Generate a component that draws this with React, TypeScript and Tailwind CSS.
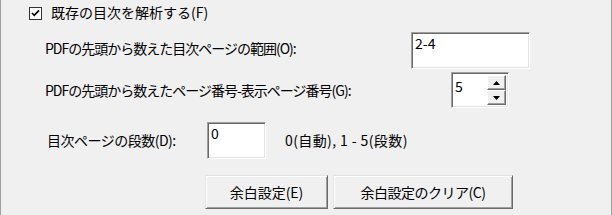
import React from 'react';

const font = { fontFamily: '"Noto Sans CJK JP", "Noto Sans", sans-serif' };

// sunken edit box, classic Win32 look
const Edit: React.FC<{ value: string; className?: string }> = ({ value, className = '' }) => (
  <div
    className={`bg-white border border-t-[#a0a0a0] border-l-[#a0a0a0] border-b-white border-r-white shadow-[inset_1px_1px_0_#696969,inset_-1px_-1px_0_#e3e3e3] pl-[3px] pt-[1px] text-[14px] leading-[18px] ${className}`}
  >
    {value}
  </div>
);

const SpinBtn: React.FC<{ up?: boolean }> = ({ up }) => (
  <div className="flex-1 flex items-center justify-center bg-[#f0f0f0] border border-t-white border-l-white border-b-[#696969] border-r-[#696969] shadow-[inset_-1px_-1px_0_#a0a0a0]">
    <svg width="7" height="4" viewBox="0 0 7 4">
      {up ? <polygon points="3.5,0 7,4 0,4" fill="#000" /> : <polygon points="0,0 7,0 3.5,4" fill="#000" />}
    </svg>
  </div>
);

const Btn: React.FC<{ label: string; className?: string }> = ({ label, className = '' }) => (
  <div
    className={`h-[34px] flex items-center justify-center bg-[#f0f0f0] border border-t-[#e3e3e3] border-l-[#e3e3e3] border-b-[#696969] border-r-[#696969] shadow-[inset_1px_1px_0_#ffffff,inset_-1px_-1px_0_#a0a0a0] text-[14px] ${className}`}
  >
    {label}
  </div>
);

const App: React.FC = () => {
  return (
    <div
      className="w-[612px] h-[215px] bg-[#f0f0f0] border-l border-r border-[#a0a0a0] text-black flex flex-col overflow-hidden"
      style={font}
    >
      {/* checkbox row */}
      <div className="h-[26px] flex items-center pl-[28px]">
        <div className="w-[13px] h-[13px] bg-white border border-[#333] flex items-center justify-center">
          <svg width="9" height="8" viewBox="0 0 9 8">
            <path d="M1 4 L3.3 6.4 L8 1.4" stroke="#000" strokeWidth="1.6" fill="none" />
          </svg>
        </div>
        <span className="ml-[9px] text-[14px] -mt-[1px]">既存の目次を解析する(F)</span>
      </div>

      {/* range */}
      <div className="mt-[6px] h-[37px] flex pl-[44px]">
        <div className="w-[366px] text-[14px] pt-[6px] tracking-[-1px]">PDFの先頭から数えた目次ページの範囲(O):</div>
        <Edit value="2-4" className="w-[119px] h-[37px]" />
      </div>

      {/* page offset */}
      <div className="mt-[3px] h-[36px] flex pl-[44px]">
        <div className="w-[406px] text-[14px] pt-[8px] tracking-[-1px]">PDFの先頭から数えたページ番号-表示ページ番号(G):</div>
        <div className="w-[58px] h-[36px] flex bg-white border border-t-[#a0a0a0] border-l-[#a0a0a0] border-b-white border-r-white shadow-[inset_1px_1px_0_#696969,inset_-1px_-1px_0_#e3e3e3] p-[2px] pl-[3px]">
          <div className="flex-1 text-[14px] leading-[18px] pt-[2px]">5</div>
          <div className="w-[19px] flex flex-col">
            <SpinBtn up />
            <SpinBtn />
          </div>
        </div>
      </div>

      {/* columns */}
      <div className="mt-[14px] h-[37px] flex items-center pl-[44px]">
        <div className="w-[162px] text-[14px] pl-[2px] tracking-[-0.5px]">目次ページの段数(D):</div>
        <Edit value="0" className="w-[59px] h-[37px]" />
        <span className="ml-[19px] text-[14px] tracking-[0.4px]">0(自動), 1 - 5(段数)</span>
      </div>

      {/* buttons */}
      <div className="mt-[16px] flex pl-[204px] gap-[5px]">
        <Btn label="余白設定(E)" className="w-[123px]" />
        <Btn label="余白設定のクリア(C)" className="w-[180px] tracking-[-0.5px]" />
      </div>
    </div>
  );
};

export default App;
